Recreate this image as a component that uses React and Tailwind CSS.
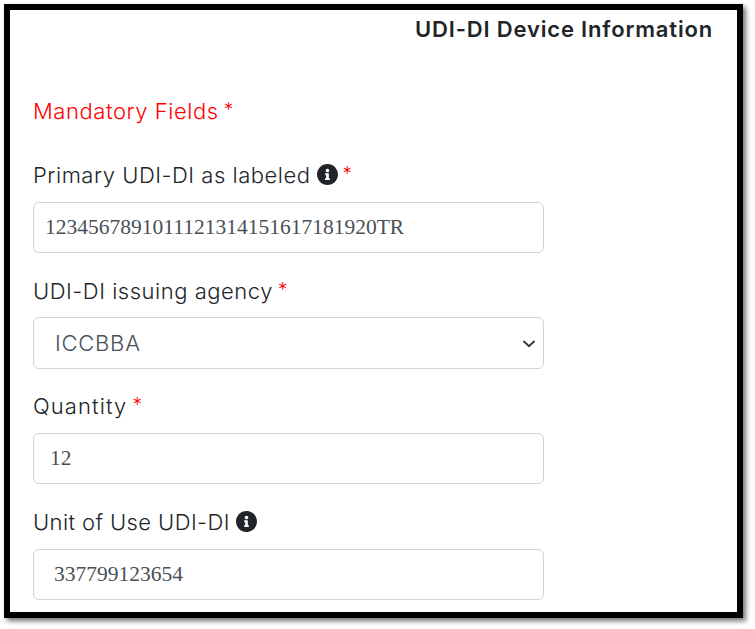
function InfoIcon() {
  return (
    <svg viewBox="8 8 496 496" className="mb-px ml-[6px] h-[21px] w-[21px] shrink-0" fill="#212529">
      <path d="M256 8C119.043 8 8 119.083 8 256c0 136.997 111.043 248 248 248s248-111.003 248-248C504 119.083 392.957 8 256 8zm0 110c23.196 0 42 18.804 42 42s-18.804 42-42 42-42-18.804-42-42 18.804-42 42-42zm56 254c0 6.627-5.373 12-12 12h-88c-6.627 0-12-5.373-12-12v-24c0-6.627 5.373-12 12-12h12v-64h-12c-6.627 0-12-5.373-12-12v-24c0-6.627 5.373-12 12-12h64c6.627 0 12 5.373 12 12v100h12c6.627 0 12 5.373 12 12v24z" />
    </svg>
  );
}

function Star() {
  return <span className="mb-[2px] ml-[5px] text-[19px] text-[#ff0000]">*</span>;
}

const label = "flex h-[34px] items-center whitespace-nowrap text-[22px] leading-[34px] font-light";
const field =
  "block h-[51px] w-[511px] rounded-[6px] border border-[#ced4da] bg-white pb-px font-['Liberation_Serif',serif] text-[21.5px] text-[#495057] outline-none";

export default function App() {
  return (
    <div className="h-[629px] w-[755px] overflow-hidden bg-white pt-1 pl-1 font-['Inter','Liberation_Sans',sans-serif] text-[#212529]">
      <main className="h-[614px] w-[739px] border-[6px] border-black bg-white pt-0.5 pl-[23px] shadow-[3px_3px_5px_rgba(0,0,0,0.55)]">
        <h1 className="flex h-[34px] items-center justify-end pr-[24px] text-[22px] font-semibold whitespace-nowrap">
          <span className="tracking-[0.83px]">UDI-DI Device Information</span>
        </h1>

        <p className={`${label} mt-12 text-[#ff0000]`}>
          <span className="tracking-[0.56px]">Mandatory Fields</span>
          <Star />
        </p>

        <label className={`${label} mt-[30px]`}>
          <span className="tracking-[0.52px]">Primary UDI-DI as labeled</span>
          <InfoIcon />
          <Star />
        </label>
        <input className={`${field} mt-2.5 pl-[11px]`} defaultValue="1234567891011121314151617181920TR" />

        <label className={`${label} mt-[21px]`}>
          <span className="tracking-[0.52px]">UDI-DI issuing agency</span>
          <Star />
        </label>
        <div className="mt-[9px] flex h-[52px] w-[511px] items-center justify-between rounded-[6px] border border-[#ced4da] pr-[7px] pl-[21px] text-[22px] font-light text-[#495057]">
          <span className="tracking-[0.75px]">ICCBBA</span>
          <svg viewBox="0 0 14 10" className="mt-px h-[10px] w-[14px]" fill="none" stroke="#343a40" strokeWidth="2">
            <path d="M1.5 2L7 7.2L12.5 2" />
          </svg>
        </div>

        <label className={`${label} mt-5`}>
          <span className="tracking-[1.1px]">Quantity</span>
          <Star />
        </label>
        <input className={`${field} mt-2.5 pl-[16px]`} defaultValue="12" />

        <label className={`${label} mt-[21px]`}>
          <span className="tracking-[0.4px]">Unit of Use UDI-DI</span>
          <InfoIcon />
        </label>
        <input className={`${field} mt-2.5 pl-[20px]`} defaultValue="337799123654" />
      </main>
    </div>
  );
}
